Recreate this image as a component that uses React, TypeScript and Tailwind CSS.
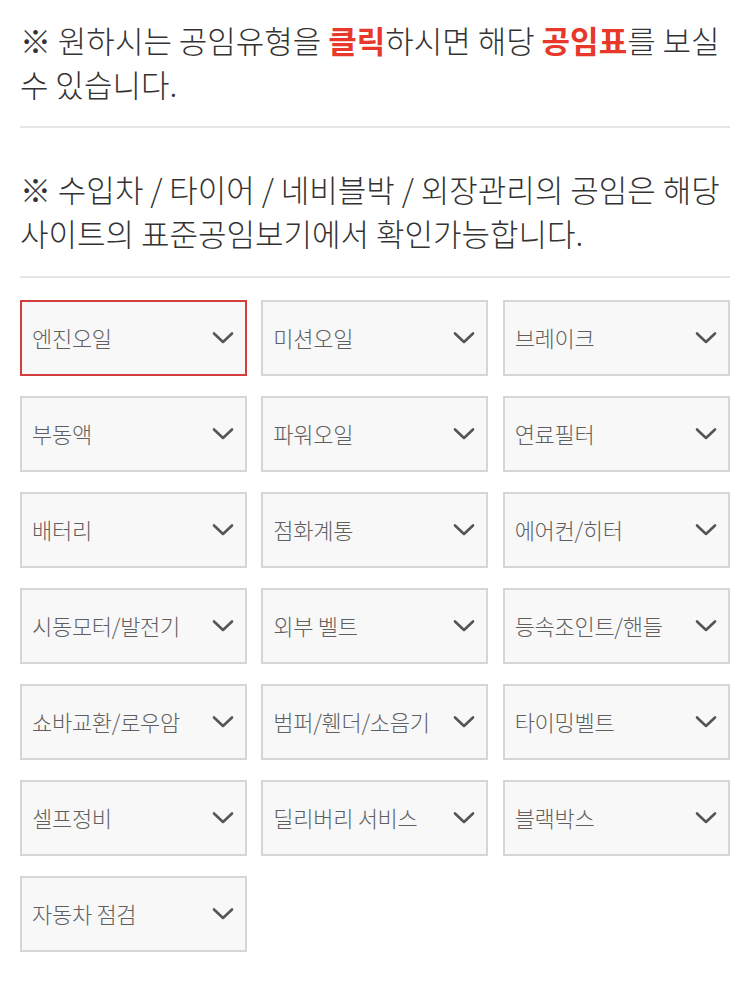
import React, { useState } from "react";

const items = [
  "엔진오일", "미션오일", "브레이크",
  "부동액", "파워오일", "연료필터",
  "배터리", "점화계통", "에어컨/히터",
  "시동모터/발전기", "외부 벨트", "등속조인트/핸들",
  "쇼바교환/로우암", "범퍼/휀더/소음기", "타이밍벨트",
  "셀프정비", "딜리버리 서비스", "블랙박스",
  "자동차 점검",
];

function Chevron() {
  return (
    <svg width="22" height="14" viewBox="0 0 22 14" fill="none" className="shrink-0">
      <path d="M2 2.5 L11 11 L20 2.5" stroke="#555" strokeWidth="2.6" strokeLinecap="round" strokeLinejoin="round" />
    </svg>
  );
}

export default function App() {
  const [selected, setSelected] = useState(0);

  return (
    <div
      className="w-[750px] bg-white px-5 text-[#333]"
      style={{ fontFamily: '"Noto Sans CJK KR", "Noto Sans", sans-serif' }}
    >
      <p className="break-keep pt-[18px] text-[31px] font-light leading-[44px]">
        ※ 원하시는 공임유형을 <b className="font-bold text-[#e8372b]">클릭</b>하시면 해당{" "}
        <b className="font-bold text-[#e8372b]">공임표</b>를 보실 수 있습니다.
      </p>
      <div className="mt-[20px] h-[2px] bg-[#e5e5e5]" />

      <p className="mt-[39px] break-keep text-[31px] font-light leading-[44px]">
        ※ 수입차 / 타이어 / 네비블박 / 외장관리의 공임은 해당 사이트의 표준공임보기에서 확인가능합니다.
      </p>
      <div className="mt-[21px] h-[2px] bg-[#e5e5e5]" />

      <div className="mt-[22px] grid grid-cols-3 gap-x-[14px] gap-y-[20px] pb-[44px]">
        {items.map((name, i) => (
          <button
            key={name}
            onClick={() => setSelected(i)}
            className={
              "flex h-[76px] w-[227px] items-center justify-between border-2 bg-[#f8f8f8] pb-[1px] pl-[10px] pr-[11px] text-left " +
              (selected === i ? "border-[#d43d3d]" : "border-[#d6d6d6]")
            }
          >
            <span className="text-[22px] font-light tracking-[-0.3px] text-[#5f5f5f]">{name}</span>
            <Chevron />
          </button>
        ))}
      </div>
    </div>
  );
}
